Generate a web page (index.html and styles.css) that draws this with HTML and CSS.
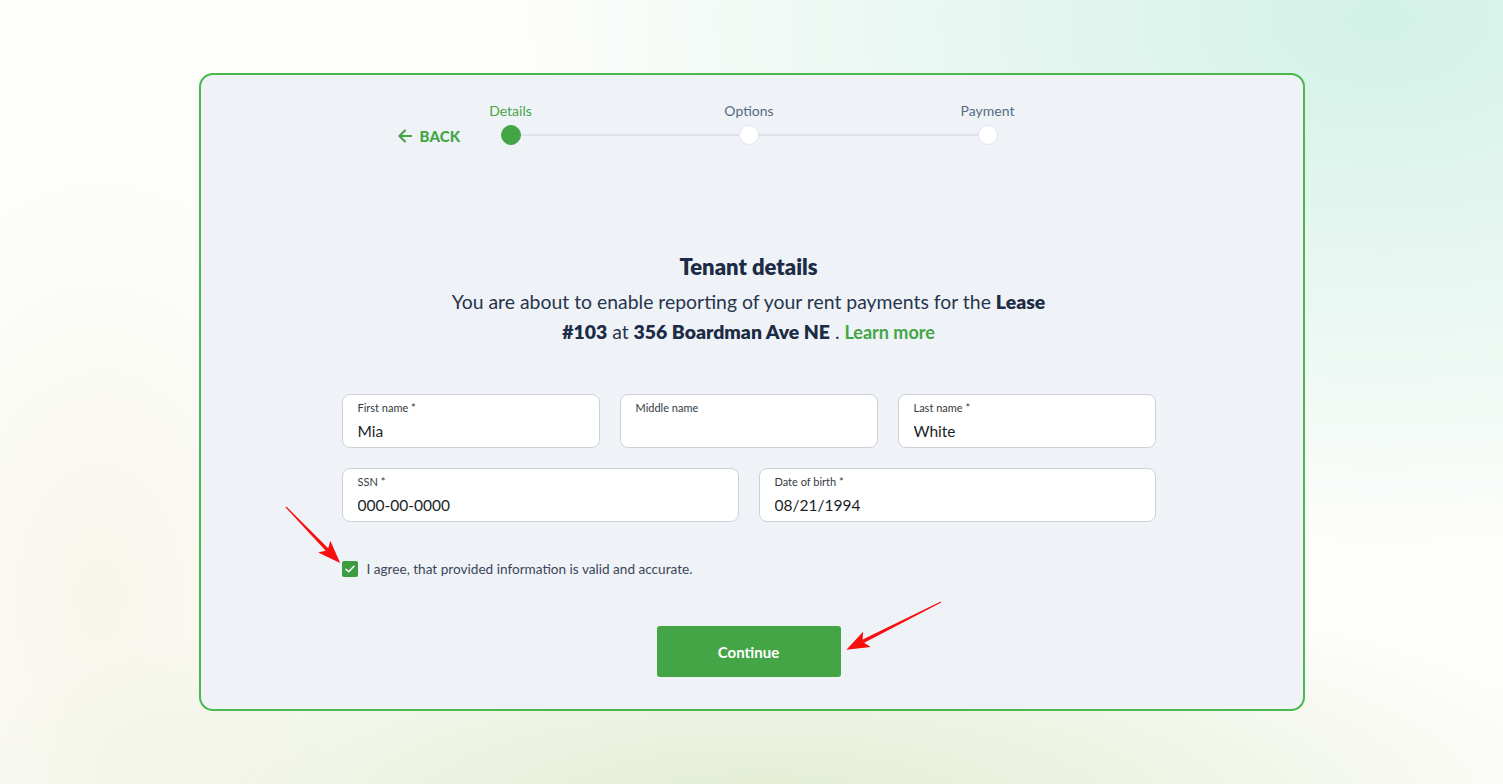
FILE: index.html
```html
<!DOCTYPE html>
<html lang="en">
<head>
    <meta charset="UTF-8">
    <meta name="viewport" content="width=device-width, initial-scale=1.0">
    <title>Tenant details</title>
    <link rel="stylesheet" href="styles.css">
</head>
<body>
    <div class="card">
        <!-- Stepper -->
        <div class="stepper">
            <a class="back" href="#">
                <svg width="15" height="14" viewBox="0 0 15 14"><path d="M14 7H2M7 1.5 1.5 7 7 12.5" fill="none" stroke="#43a545" stroke-width="2.2" stroke-linecap="round" stroke-linejoin="round"/></svg>
                BACK
            </a>
            <div class="steps">
                <div class="step active">
                    <span class="step-label">Details</span>
                    <span class="dot"></span>
                </div>
                <div class="step">
                    <span class="step-label">Options</span>
                    <span class="dot"></span>
                </div>
                <div class="step">
                    <span class="step-label">Payment</span>
                    <span class="dot"></span>
                </div>
            </div>
        </div>

        <h1 class="title">Tenant details</h1>
        <p class="intro">You are about to enable reporting of your rent payments for the <b>Lease</b> <b>#103</b> at <b>356 Boardman Ave NE</b> . <a href="#">Learn more</a></p>

        <form class="form">
            <div class="row three">
                <label class="field">
                    <span class="field-label">First name *</span>
                    <input type="text" value="Mia">
                </label>
                <label class="field">
                    <span class="field-label">Middle name</span>
                    <input type="text" value="">
                </label>
                <label class="field">
                    <span class="field-label">Last name *</span>
                    <input type="text" value="White">
                </label>
            </div>
            <div class="row two">
                <label class="field">
                    <span class="field-label">SSN *</span>
                    <input type="text" value="000-00-0000">
                </label>
                <label class="field">
                    <span class="field-label">Date of birth *</span>
                    <input type="text" value="08/21/1994">
                </label>
            </div>

            <label class="agree">
                <span class="checkbox">
                    <svg width="10" height="8" viewBox="0 0 10 8"><path d="M1 4.2 3.7 6.8 9 1.2" fill="none" stroke="#fff" stroke-width="1.5" stroke-linecap="round" stroke-linejoin="round"/></svg>
                </span>
                I agree, that provided information is valid and accurate.
            </label>

            <div class="actions">
                <button type="button" class="continue">Continue</button>
            </div>
        </form>
    </div>

    <!-- annotation arrows -->
    <svg class="arrows" width="1503" height="784" viewBox="0 0 1503 784">
        <g fill="#f5100f" transform="translate(286 507) rotate(46)">
            <polygon points="0,-0.6 60,-1.8 60,1.8 0,0.6"/>
            <polygon points="78,0 55,-8.5 60,0 55,8.5"/>
        </g>
        <g fill="#f5100f" transform="translate(941 602) rotate(153.2)">
            <polygon points="0,-0.6 88,-1.8 88,1.8 0,0.6"/>
            <polygon points="106,0 83,-8.5 88,0 83,8.5"/>
        </g>
    </svg>
</body>
</html>
```

FILE: styles.css
```css
html, body {
    margin: 0;
    height: 100%;
}
body {
    position: relative;
    padding-top: 73px;
    box-sizing: border-box;
    font-family: Lato, "Open Sans", Arial, sans-serif;
    color: #1d2c46;
    background:
        radial-gradient(ellipse 850px 520px at 1380px 20px, rgba(208, 241, 230, 0.95), rgba(208, 241, 230, 0) 100%),
        radial-gradient(ellipse 850px 240px at 760px 810px, rgba(224, 235, 206, 0.95), rgba(224, 235, 206, 0) 100%),
        radial-gradient(ellipse 260px 420px at 100px 600px, rgba(246, 244, 232, 0.8), rgba(246, 244, 232, 0) 100%),
        #fdfdfb;
    overflow: hidden;
}
.card {
    width: 1106px;
    height: 638px;
    margin: 0 auto;
    box-sizing: border-box;
    border: 2px solid #4cb74a;
    border-radius: 14px;
    background-color: #eff3f8;
    padding: 28px 147px 0 141px;
}

/* stepper */
.stepper {
    display: flex;
    align-items: flex-end;
    margin-left: 56px;
}
.back {
    display: flex;
    align-items: center;
    gap: 7px;
    width: 63px;
    height: 20px;
    margin-bottom: -1px;
    color: #43a545;
    font-size: 15px;
    font-weight: 900;
    text-decoration: none;
    letter-spacing: 0.2px;
}
.steps {
    position: relative;
    display: flex;
    gap: 138.5px;
}
.steps::before {
    content: "";
    position: absolute;
    left: 50px;
    right: 50px;
    bottom: 9px;
    height: 2px;
    background-color: #dde3ec;
}
.step {
    width: 100px;
    display: flex;
    flex-direction: column;
    align-items: center;
    gap: 6px;
    position: relative;
}
.step-label {
    font-size: 14px;
    line-height: 16px;
    color: #586a80;
}
.dot {
    width: 20px;
    height: 20px;
    box-sizing: border-box;
    border-radius: 50%;
    background-color: #fff;
    border: 1px solid #dfe5ee;
}
.step.active .step-label {
    color: #43a545;
}
.step.active .dot {
    background-color: #43a545;
    border-color: #43a545;
}

/* heading */
.title {
    margin: 109px 0 0;
    font-size: 22px;
    line-height: 26px;
    font-weight: 800;
    text-align: center;
}
.intro {
    margin: 7px auto 0;
    max-width: 600px;
    font-size: 19.4px;
    line-height: 30px;
    text-align: center;
    color: #27354d;
}
.intro b {
    font-weight: 800;
    color: #1d2c46;
}
.intro a {
    color: #43a545;
    font-weight: 700;
    font-size: 18px;
    text-decoration: none;
}

/* form */
.form {
    margin-top: 47px;
}
.row {
    display: grid;
    gap: 20px;
    margin-bottom: 20px;
}
.row.three {
    grid-template-columns: repeat(3, 1fr);
}
.row.two {
    grid-template-columns: repeat(2, 1fr);
}
.field {
    display: flex;
    flex-direction: column;
    height: 54px;
    box-sizing: border-box;
    padding: 7px 15px 0;
    background-color: #fff;
    border: 1px solid #cdd2d9;
    border-radius: 8px;
}
.field-label {
    font-size: 11px;
    line-height: 12px;
    color: #333a44;
}
.field input {
    margin-top: 7px;
    padding: 0;
    border: none;
    outline: none;
    background: none;
    font-family: inherit;
    font-size: 15.5px;
    line-height: 20px;
    color: #1b1f26;
}
.agree {
    display: flex;
    align-items: center;
    gap: 9px;
    margin-top: 39px;
    font-size: 13.6px;
    line-height: 16px;
    color: #3a4659;
}
.checkbox {
    width: 16px;
    height: 16px;
    border-radius: 2px;
    background-color: #3d9c42;
    display: flex;
    align-items: center;
    justify-content: center;
}
.actions {
    display: flex;
    justify-content: center;
    margin-top: 49px;
}
.continue {
    width: 184px;
    height: 51px;
    border: none;
    border-radius: 3px;
    background-color: #43a545;
    color: #fff;
    font-family: inherit;
    font-size: 15px;
    font-weight: 700;
    cursor: pointer;
}
.continue:hover {
    background-color: #3b9a3d;
}

.arrows {
    position: absolute;
    left: 0;
    top: 0;
    pointer-events: none;
}
```
